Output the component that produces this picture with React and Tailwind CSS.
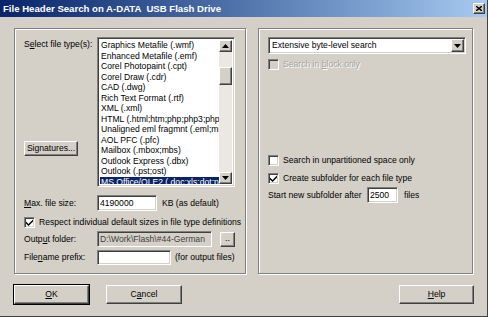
import React from 'react';

const FONT = "font-['Liberation_Sans',Arial,sans-serif]";
const SUNKEN =
  'border border-t-[#808080] border-l-[#808080] border-r-white border-b-white shadow-[inset_1px_1px_0_#404040,inset_-1px_-1px_0_#d4d0c8]';
const RAISED =
  'border border-t-white border-l-white border-r-[#404040] border-b-[#404040] shadow-[inset_-1px_-1px_0_#808080] bg-[#d4d0c8]';
const ETCHED = 'border border-[#808080] shadow-[inset_1px_1px_0_#fff,1px_1px_0_#fff]';

const FILE_TYPES = [
  'Graphics Metafile (.wmf)',
  'Enhanced Metafile (.emf)',
  'Corel Photopaint (.cpt)',
  'Corel Draw (.cdr)',
  'CAD (.dwg)',
  'Rich Text Format (.rtf)',
  'XML (.xml)',
  'HTML (.html;htm;php;php3;php-',
  'Unaligned eml fragmnt (.eml;mht',
  'AOL PFC (.pfc)',
  'Mailbox (.mbox;mbs)',
  'Outlook Express (.dbx)',
  'Outlook (.pst;ost)',
  'MS Office/OLE2 (.doc;xls;dot;p',
];

function Arrow({ up }) {
  return (
    <svg width="7" height="4" viewBox="0 0 7 4">
      <path d={up ? 'M3.5 0 L7 4 L0 4Z' : 'M0 0 L7 0 L3.5 4Z'} fill="#000" />
    </svg>
  );
}

function Button({ className = '', children }) {
  return (
    <div className={`flex items-center justify-center ${RAISED} ${className}`}>{children}</div>
  );
}

function Check({ checked, disabled }) {
  return (
    <span
      className={`w-[11px] h-[11px] shrink-0 flex items-center justify-center ${SUNKEN} ${
        disabled ? 'bg-[#d4d0c8]' : 'bg-white'
      }`}
    >
      {checked && (
        <svg width="7" height="7" viewBox="0 0 7 7">
          <path d="M0 2.5 L2.5 5 L7 0.5 L7 2.5 L2.5 7 L0 4.5Z" fill="#000" />
        </svg>
      )}
    </span>
  );
}

function U({ children }) {
  return <span className="underline underline-offset-[1px]">{children}</span>;
}

export default function App() {
  return (
    <div
      className={`${FONT} w-[488px] h-[317px] bg-[#d4d0c8] flex flex-col overflow-hidden border-r border-b border-r-[#404040] border-b-[#404040] text-[8.6px] text-black leading-none`}
    >
      <div className="h-[17px] shrink-0 flex items-center justify-between pl-[3px] pr-[2px] bg-linear-to-r from-[#0a246a] to-[#a6caf0]">
        <span className="text-white font-bold text-[9.6px] whitespace-pre">
          File Header Search on A-DATA  USB Flash Drive
        </span>
        <div className={`w-[12px] h-[11px] ${RAISED} flex items-center justify-center`}>
          <svg width="6" height="5" viewBox="0 0 6 5">
            <path d="M0 0 L6 5 M6 0 L0 5" stroke="#000" strokeWidth="1.4" />
          </svg>
        </div>
      </div>

      <div className="flex-1 flex flex-col pl-[14px] pt-[11px]">
        <div className="flex gap-[12px] h-[246px]">
          {/* left panel */}
          <div className={`w-[232px] h-full ${ETCHED} pl-[9px] pt-[8px] flex flex-col`}>
            <div className="flex h-[150px]">
              <div className="w-[73px] flex flex-col">
                <span className="mt-[3px]">
                  S<U>e</U>lect file type(s):
                </span>
                <Button className="w-[54px] h-[15px] mt-auto mb-[31px]">Signatures...</Button>
              </div>
              <div className={`w-[138px] h-[150px] bg-white ${SUNKEN} p-[2px] flex`}>
                <div className="flex-1 overflow-hidden pt-[0px]">
                  {FILE_TYPES.map((t, i) => (
                    <div
                      key={t}
                      className={`h-[10.5px] leading-[10.5px] pl-[1px] whitespace-nowrap ${
                        i === FILE_TYPES.length - 1 ? 'bg-[#0a246a] text-white' : ''
                      }`}
                    >
                      {t}
                    </div>
                  ))}
                </div>
                <div className="w-[13px] bg-[#ebe8e3] flex flex-col">
                  <Button className="h-[12px]">
                    <Arrow up />
                  </Button>
                  <Button className="h-[18px] mt-[15px]" />
                  <Button className="h-[12px] mt-auto">
                    <Arrow />
                  </Button>
                </div>
              </div>
            </div>

            <div className="flex items-center mt-[8px] h-[16px]">
              <span className="w-[73px]">
                <U>M</U>ax. file size:
              </span>
              <div className={`w-[60px] h-[16px] bg-white ${SUNKEN} flex items-center pl-[2px]`}>4190000</div>
              <span className="ml-[5px]">KB (as default)</span>
            </div>

            <div className="flex items-center mt-[6px] h-[11px] gap-[4px]">
              <Check checked />
              <span>Respect individual default sizes in file type definitions</span>
            </div>

            <div className="flex items-center mt-[3px] h-[16px]">
              <span className="w-[73px]">
                Outp<U>u</U>t folder:
              </span>
              <div
                className={`w-[115px] h-[16px] bg-[#d4d0c8] ${SUNKEN} flex items-center pl-[2px] overflow-hidden whitespace-nowrap text-[#404040]`}
              >
                D:\Work\Flash\#44-German
              </div>
              <Button className="w-[15px] h-[15px] ml-[8px] items-end pb-[3px]">..</Button>
            </div>

            <div className="flex items-center mt-[3px] h-[15px]">
              <span className="w-[73px]">
                File<U>n</U>ame prefix:
              </span>
              <div className={`w-[74px] h-[15px] bg-white ${SUNKEN}`} />
              <span className="ml-[4px]">(for output files)</span>
            </div>
          </div>

          {/* right panel */}
          <div className={`w-[215px] h-full ${ETCHED} pl-[9px] pt-[8px] flex flex-col`}>
            <div className={`w-[198px] h-[17px] bg-white ${SUNKEN} p-[1px] flex items-center`}>
              <span className="flex-1 pl-[2px]">Extensive byte-level search</span>
              <Button className="w-[13px] h-[13px]">
                <Arrow />
              </Button>
            </div>
            <div className="flex items-center gap-[4px] mt-[5px] h-[11px] text-[#a7a49e]">
              <Check disabled />
              <span className="[text-shadow:1px_1px_0_#fff]">
                Search in <U>b</U>lock only
              </span>
            </div>

            <div className="flex items-center gap-[4px] mt-[85px] h-[11px]">
              <Check />
              <span>Search in unpartitioned space only</span>
            </div>
            <div className="flex items-center gap-[4px] mt-[7px] h-[11px]">
              <Check checked />
              <span>Create subfolder for each file type</span>
            </div>
            <div className="flex items-center mt-[3px] h-[16px]">
              <span className="w-[99px]">Start new subfolder after</span>
              <div className={`w-[31px] h-[16px] bg-white ${SUNKEN} flex items-center pl-[2px]`}>2500</div>
              <span className="ml-[6px]">files</span>
            </div>
          </div>
        </div>

        <div className="flex mt-[11px] pr-[13px]">
          <Button className="w-[75px] h-[19px] outline outline-1 outline-black">
            <U>O</U>K
          </Button>
          <Button className="w-[76px] h-[19px] ml-[17px]">
            C<U>a</U>ncel
          </Button>
          <Button className="w-[75px] h-[19px] ml-auto">
            <U>H</U>elp
          </Button>
        </div>
      </div>
    </div>
  );
}
